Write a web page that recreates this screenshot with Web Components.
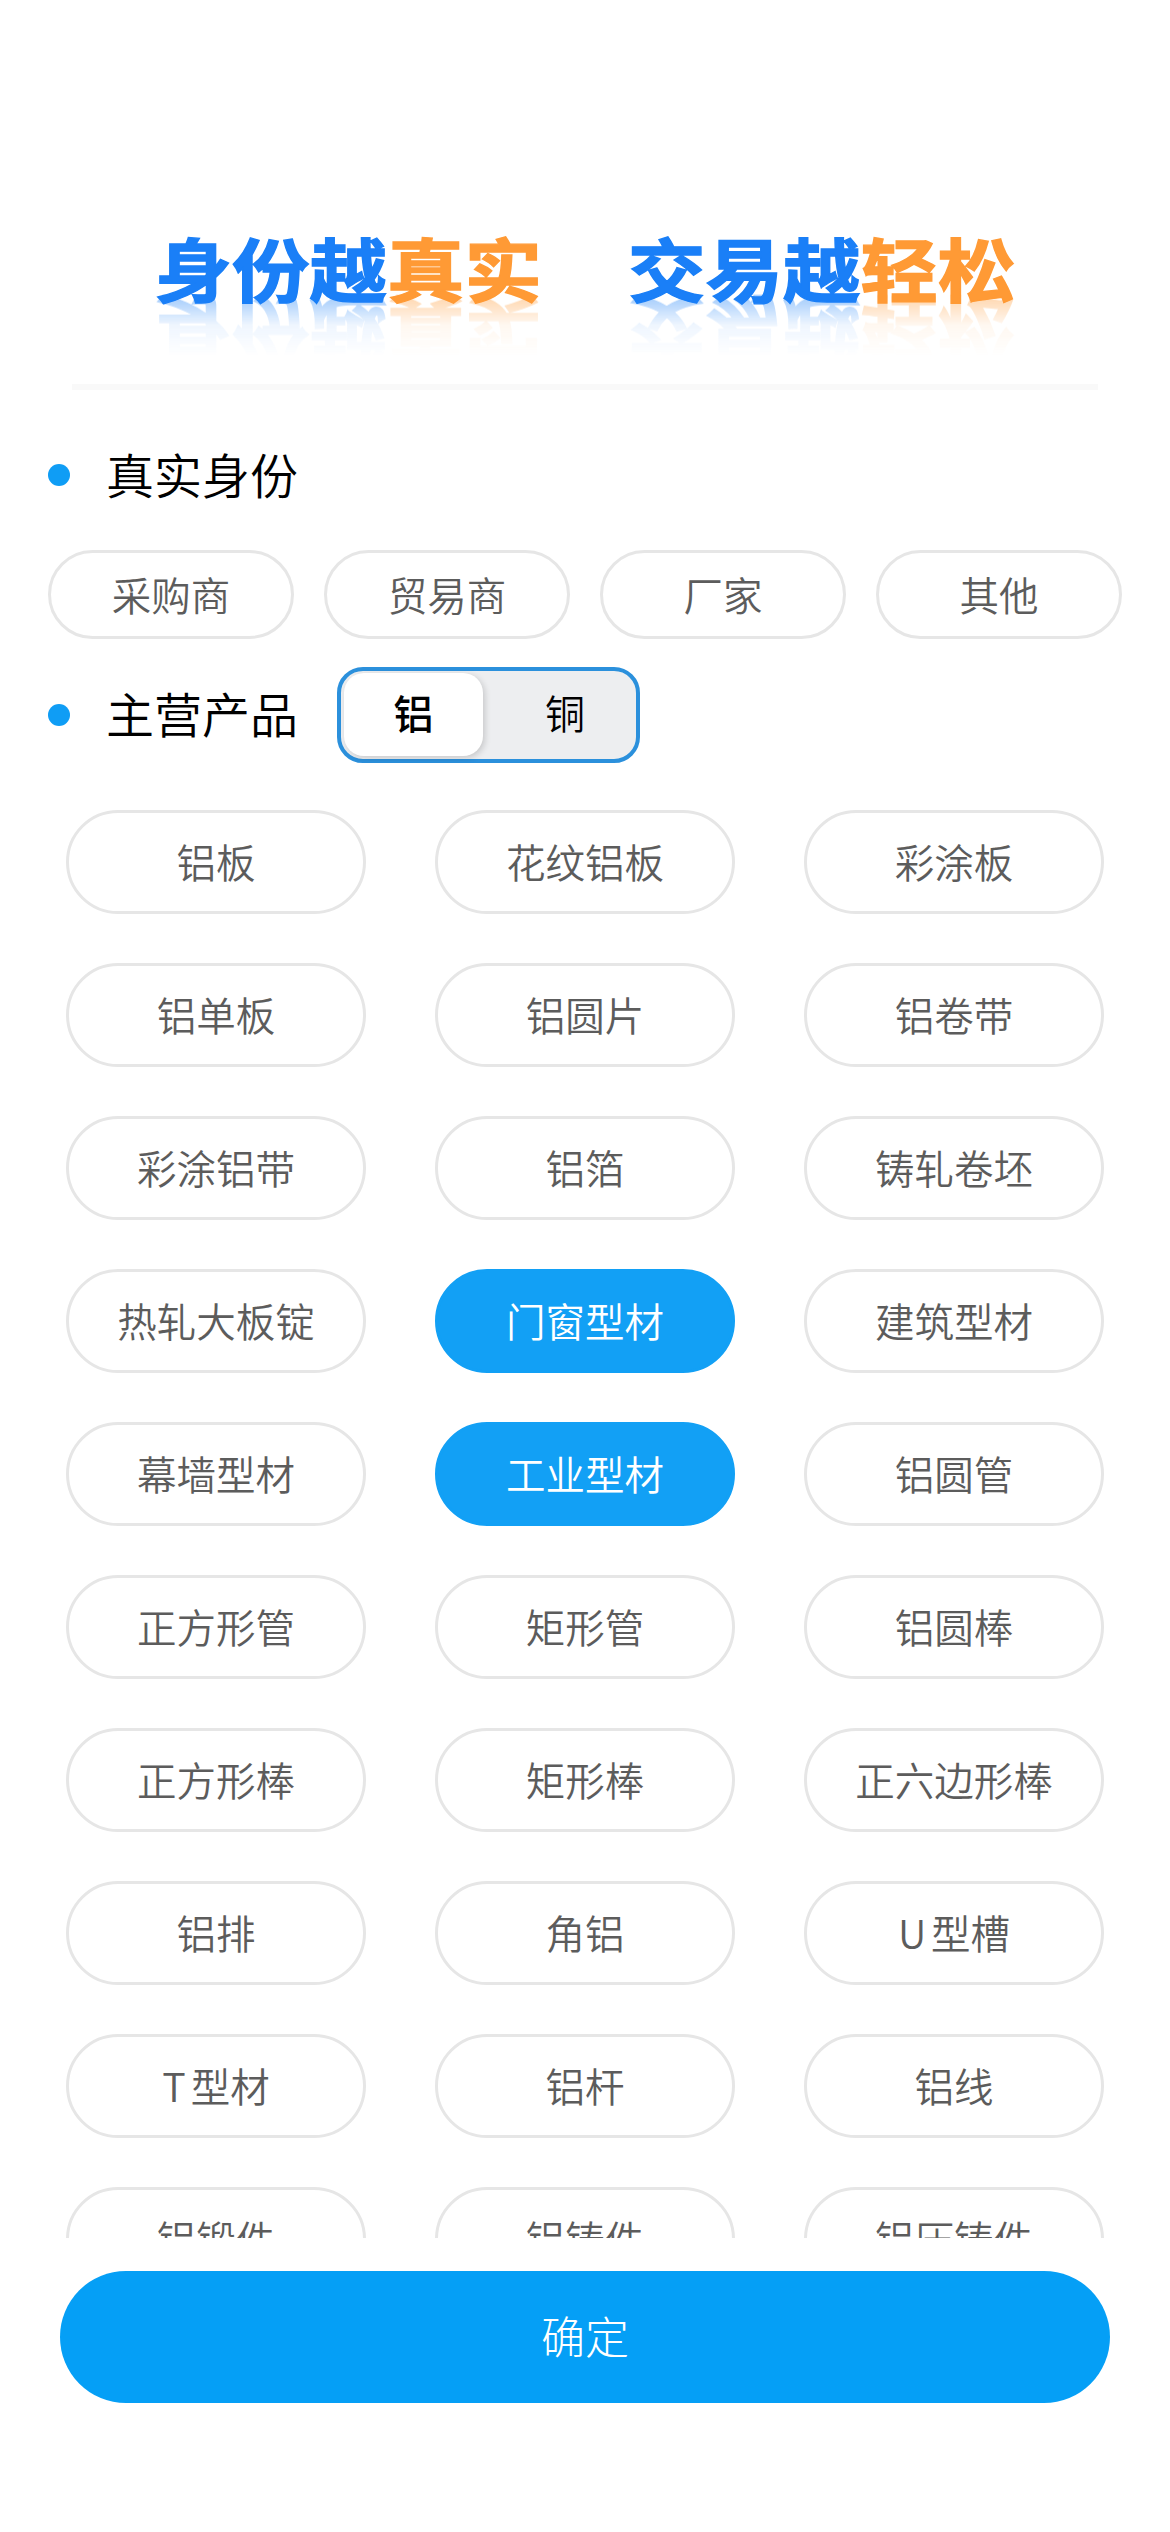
<!DOCTYPE html>
<html lang="zh-CN">
<head>
<meta charset="utf-8">
<title>身份越真实 交易越轻松</title>
<style>
    html, body { margin: 0; padding: 0; background: #ffffff; }
    body {
        width: 1170px;
        height: 2532px;
        overflow: hidden;
        font-family: "Noto Sans CJK SC", "Noto Sans", sans-serif;
    }
</style>
</head>
<body>
<app-banner></app-banner>
<section-title style="margin-top:61px">真实身份</section-title>
<role-row>
    <chip-pill size="small">采购商</chip-pill>
    <chip-pill size="small">贸易商</chip-pill>
    <chip-pill size="small">厂家</chip-pill>
    <chip-pill size="small">其他</chip-pill>
</role-row>
<product-head></product-head>
<product-grid>
    <chip-pill>铝板</chip-pill>
    <chip-pill>花纹铝板</chip-pill>
    <chip-pill>彩涂板</chip-pill>
    <chip-pill>铝单板</chip-pill>
    <chip-pill>铝圆片</chip-pill>
    <chip-pill>铝卷带</chip-pill>
    <chip-pill>彩涂铝带</chip-pill>
    <chip-pill>铝箔</chip-pill>
    <chip-pill>铸轧卷坯</chip-pill>
    <chip-pill>热轧大板锭</chip-pill>
    <chip-pill selected>门窗型材</chip-pill>
    <chip-pill>建筑型材</chip-pill>
    <chip-pill>幕墙型材</chip-pill>
    <chip-pill selected>工业型材</chip-pill>
    <chip-pill>铝圆管</chip-pill>
    <chip-pill>正方形管</chip-pill>
    <chip-pill>矩形管</chip-pill>
    <chip-pill>铝圆棒</chip-pill>
    <chip-pill>正方形棒</chip-pill>
    <chip-pill>矩形棒</chip-pill>
    <chip-pill>正六边形棒</chip-pill>
    <chip-pill>铝排</chip-pill>
    <chip-pill>角铝</chip-pill>
    <chip-pill>U 型槽</chip-pill>
    <chip-pill>T 型材</chip-pill>
    <chip-pill>铝杆</chip-pill>
    <chip-pill>铝线</chip-pill>
    <chip-pill>铝锻件</chip-pill>
    <chip-pill>铝铸件</chip-pill>
    <chip-pill>铝压铸件</chip-pill>
</product-grid>
<confirm-bar>确定</confirm-bar>

<script>
class AppBanner extends HTMLElement {
    constructor() {
        super();
        const shadow = this.attachShadow({ mode: 'open' });
        shadow.innerHTML = `
            <style>
                :host {
                    display: block;
                    height: 390px;
                    box-sizing: border-box;
                    padding-top: 224px;
                }
                .slogan {
                    display: flex;
                    justify-content: center;
                    gap: 86px;
                    height: 160px;
                }
                .phrase {
                    display: block;
                    height: 84px;
                    line-height: 84px;
                    font-size: 77.5px;
                    font-weight: 700;
                    white-space: nowrap;
                    color: #1a7ff7;
                    -webkit-text-stroke: 1.5px currentColor;
                    transform: scaleY(0.9);
                    -webkit-box-reflect: below -10px linear-gradient(to bottom, rgba(0,0,0,0) 20%, rgba(0,0,0,0.07) 60%, rgba(0,0,0,0.42) 100%);
                }
                .phrase b { font-weight: inherit; color: #ff9a35; }
                .line {
                    height: 6px;
                    margin: 0 72px;
                    background: #f9f9f9;
                }
            </style>
            <div class="slogan">
                <span class="phrase">身份越<b>真实</b></span>
                <span class="phrase">交易越<b>轻松</b></span>
            </div>
            <div class="line"></div>
        `;
    }
}

class SectionTitle extends HTMLElement {
    constructor() {
        super();
        const shadow = this.attachShadow({ mode: 'open' });
        shadow.innerHTML = `
            <style>
                :host {
                    display: flex;
                    align-items: center;
                    gap: 36px;
                    padding-left: 48px;
                    height: 48px;
                    font-size: 48px;
                    font-weight: 350;
                    line-height: 48px;
                    color: #000;
                }
                .dot {
                    width: 22px;
                    height: 22px;
                    border-radius: 50%;
                    background: #0f9df5;
                    flex: none;
                }
                .label { margin-top: -5px; }
            </style>
            <span class="dot"></span><span class="label"><slot></slot></span>
        `;
    }
}

class ChipPill extends HTMLElement {
    constructor() {
        super();
        const shadow = this.attachShadow({ mode: 'open' });
        shadow.innerHTML = `
            <style>
                :host {
                    display: flex;
                    align-items: center;
                    justify-content: center;
                    box-sizing: border-box;
                    height: 104px;
                    padding-bottom: 3px;
                    border: 3px solid #e6e6e6;
                    border-radius: 52px;
                    background: #fff;
                    color: #5c5c5c;
                    font-size: 39.5px;
                    font-weight: 350;
                    word-spacing: -4px;
                    white-space: nowrap;
                }
                :host([size="small"]) {
                    height: 89px;
                    border-radius: 45px;
                }
                :host([selected]) {
                    background: #12a0f5;
                    border-color: #12a0f5;
                    color: #fff;
                }
            </style>
            <slot></slot>
        `;
    }
}

class RoleRow extends HTMLElement {
    constructor() {
        super();
        const shadow = this.attachShadow({ mode: 'open' });
        shadow.innerHTML = `
            <style>
                :host {
                    display: grid;
                    grid-template-columns: repeat(4, 246px);
                    gap: 30px;
                    padding-left: 48px;
                    margin-top: 51px;
                }
            </style>
            <slot></slot>
        `;
    }
}

class ProductHead extends HTMLElement {
    constructor() {
        super();
        const shadow = this.attachShadow({ mode: 'open' });
        shadow.innerHTML = `
            <style>
                :host {
                    display: flex;
                    align-items: center;
                    gap: 39px;
                    margin-top: 28px;
                    height: 95px;
                }
            </style>
            <section-title>主营产品</section-title>
            <metal-switch></metal-switch>
        `;
    }
}

class MetalSwitch extends HTMLElement {
    constructor() {
        super();
        const shadow = this.attachShadow({ mode: 'open' });
        shadow.innerHTML = `
            <style>
                :host {
                    display: flex;
                    box-sizing: border-box;
                    width: 303px;
                    height: 96px;
                    padding: 2px 3px 3px;
                    border: 4px solid #2b90dc;
                    border-radius: 26px;
                    background: #edeef0;
                    color: #000;
                    font-size: 40px;
                }
                span {
                    display: flex;
                    align-items: center;
                    justify-content: center;
                    padding-bottom: 4px;
                }
                .on {
                    width: 139px;
                    background: #fff;
                    border-radius: 20px;
                    box-shadow: 2px 2px 6px rgba(0, 0, 0, 0.16);
                    font-weight: 500;
                }
                .off {
                    flex: 1;
                    padding-left: 14px;
                    font-weight: 350;
                }
            </style>
            <span class="on">铝</span>
            <span class="off">铜</span>
        `;
    }
}

class ProductGrid extends HTMLElement {
    constructor() {
        super();
        const shadow = this.attachShadow({ mode: 'open' });
        shadow.innerHTML = `
            <style>
                :host {
                    display: grid;
                    grid-template-columns: repeat(3, 300px);
                    column-gap: 69px;
                    row-gap: 49px;
                    align-content: start;
                    height: 1428px;
                    overflow: hidden;
                    padding-left: 66px;
                    margin-top: 48px;
                }
            </style>
            <slot></slot>
        `;
    }
}

class ConfirmBar extends HTMLElement {
    constructor() {
        super();
        const shadow = this.attachShadow({ mode: 'open' });
        shadow.innerHTML = `
            <style>
                :host {
                    display: flex;
                    align-items: center;
                    justify-content: center;
                    height: 132px;
                    margin: 33px 60px 0;
                    padding-bottom: 4px;
                    box-sizing: border-box;
                    border-radius: 66px;
                    background: #059ff6;
                    color: #fff;
                    font-size: 44px;
                    font-weight: 300;
                }
            </style>
            <slot></slot>
        `;
    }
}

customElements.define('app-banner', AppBanner);
customElements.define('section-title', SectionTitle);
customElements.define('chip-pill', ChipPill);
customElements.define('role-row', RoleRow);
customElements.define('metal-switch', MetalSwitch);
customElements.define('product-head', ProductHead);
customElements.define('product-grid', ProductGrid);
customElements.define('confirm-bar', ConfirmBar);
</script>
</body>
</html>
